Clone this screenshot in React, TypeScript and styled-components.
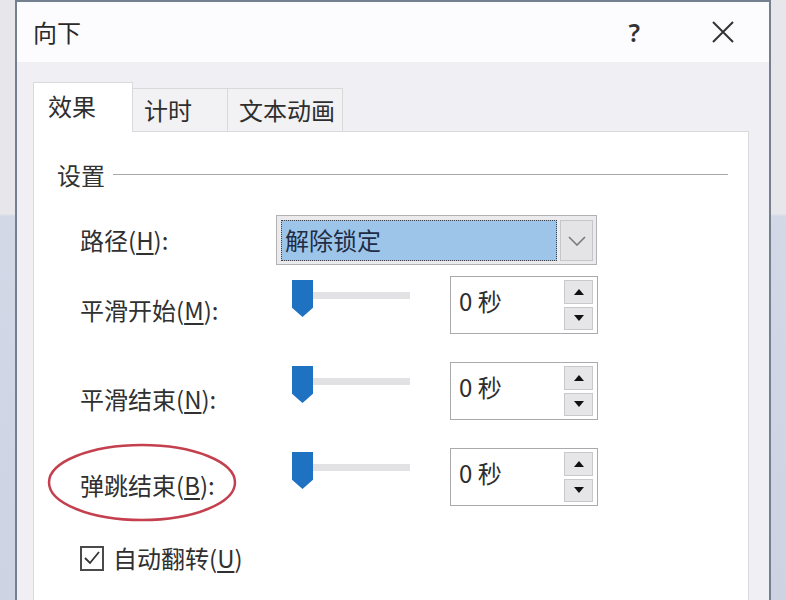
import React from "react";
import styled, { createGlobalStyle } from "styled-components";

const GlobalStyle = createGlobalStyle`
  html, body { margin: 0; padding: 0; }
  body {
    width: 786px;
    height: 600px;
    overflow: hidden;
    font-family: "Noto Sans CJK SC", "Noto Sans", sans-serif;
    color: #2e2e2e;
  }
  * { box-sizing: border-box; }
`;

const Screen = styled.div`
  width: 786px;
  height: 600px;
  overflow: hidden;
  display: flex;
  background: linear-gradient(
    to bottom,
    #e7e7eb 0,
    #e7e7eb 214px,
    #d2d8e6 216px,
    #cdd3e3 100%
  );
`;

const Dialog = styled.div`
  margin-left: 15px;
  width: 756px;
  height: 640px;
  display: flex;
  flex-direction: column;
  border: 2px solid #74808f;
  border-bottom: none;
  background: #f0f0f4;
`;

const TitleBar = styled.div`
  height: 60px;
  display: flex;
  align-items: center;
  padding: 0 35px 0 16px;
  background: #fcfcfe;
`;

const Title = styled.div`
  flex: 1;
  font-size: 24px;
  line-height: 30px;
  color: #2a2a2a;
`;

const HelpButton = styled.div`
  font-family: "Noto Sans", sans-serif;
  font-size: 25px;
  font-weight: 600;
  line-height: 30px;
  color: #333;
  margin-right: 72px;
`;

const CloseButton = styled.div`
  width: 22px;
  height: 22px;
  display: flex;
`;

const Body = styled.div`
  flex: 1;
  display: flex;
  flex-direction: column;
  padding: 20px 20px 0 16px;
`;

const TabStrip = styled.div`
  display: flex;
  align-items: flex-end;
  height: 50px;
  margin-bottom: -1px;
  position: relative;
  z-index: 1;
`;

const Tab = styled.div<{ $active?: boolean; $w: number; $pl: number }>`
  width: ${(p) => p.$w}px;
  height: ${(p) => (p.$active ? 50 : 44)}px;
  padding-left: ${(p) => p.$pl}px;
  padding-top: ${(p) => (p.$active ? 8 : 6)}px;
  font-size: 24px;
  line-height: 30px;
  color: #2e2e2e;
  background: ${(p) => (p.$active ? "#ffffff" : "#f2f2f4")};
  border: 1px solid #d9d9dc;
  border-bottom: ${(p) => (p.$active ? "none" : "1px solid #d9d9dc")};
  border-left: ${(p) => (p.$active ? "1px solid #d9d9dc" : "none")};
`;

const Panel = styled.div`
  flex: 1;
  background: #ffffff;
  border: 1px solid #d9d9dc;
  padding: 28px 20px 0 23px;
  display: flex;
  flex-direction: column;
`;

const GroupHeader = styled.div`
  display: flex;
  align-items: center;
  gap: 8px;
  font-size: 24px;
  line-height: 30px;
  color: #333;
`;

const GroupLine = styled.div`
  flex: 1;
  height: 1px;
  margin-top: -2px;
  background: #a8a8ab;
`;

const Form = styled.div`
  margin-left: 23px;
  display: flex;
  flex-direction: column;
`;

const Row = styled.div<{ $gap: number; $align?: string }>`
  position: relative;
  display: flex;
  align-items: ${(p) => p.$align || "flex-start"};
  margin-top: ${(p) => p.$gap}px;
`;

const Label = styled.div<{ $pt?: number }>`
  width: 196px;
  padding-top: ${(p) => p.$pt || 0}px;
  font-size: 24px;
  line-height: 30px;
  color: #303030;
  white-space: nowrap;
  u { text-underline-offset: 3px; text-decoration-thickness: 1.5px; }
`;

const Combo = styled.div`
  width: 321px;
  height: 50px;
  display: flex;
  gap: 3px;
  padding: 4px 3px 3px 4px;
  border: 1px solid #b2b2b5;
  background: #ebebee;
`;

const ComboValue = styled.div`
  flex: 1;
  background: #9dc5ea;
  outline: 1px dotted #3a3f4a;
  outline-offset: -1px;
  padding-left: 4px;
  font-size: 24px;
  line-height: 40px;
  color: #1f2c44;
`;

const ComboButton = styled.div`
  width: 33px;
  display: flex;
  align-items: center;
  justify-content: center;
  background: #e4e4e6;
  border: 1px solid #c6c6c9;
`;

const Slider = styled.div`
  margin-left: 16px;
  margin-top: 4px;
  display: flex;
  align-items: flex-start;
  width: 118px;
`;

const Thumb = styled.div`
  width: 21px;
  height: 37px;
  background: #1f72c2;
  clip-path: polygon(0 0, 100% 0, 100% 75%, 50% 100%, 0 75%);
`;

const Track = styled.div`
  flex: 1;
  height: 7px;
  margin-top: 12px;
  background: #e2e2e4;
`;

const SpinBox = styled.div`
  margin-left: 40px;
  width: 148px;
  height: 58px;
  display: flex;
  padding: 3px 4px 3px 8px;
  border: 1px solid #aaaaad;
  background: #ffffff;
`;

const SpinValue = styled.div`
  flex: 1;
  padding-top: 6px;
  font-size: 24px;
  line-height: 30px;
  color: #2e2e2e;
`;

const SpinButtons = styled.div`
  width: 29px;
  display: flex;
  flex-direction: column;
  gap: 3px;
`;

const SpinButton = styled.div`
  flex: 1;
  display: flex;
  align-items: center;
  justify-content: center;
  background: #e6e6e8;
  border: 1px solid #c9c9cc;
`;

const CheckRow = styled.div`
  display: flex;
  align-items: center;
  gap: 9px;
  margin-top: 37px;
  font-size: 24px;
  line-height: 30px;
  color: #303030;
  u { text-underline-offset: 3px; text-decoration-thickness: 1.5px; }
`;

const CheckBox = styled.div`
  width: 24px;
  height: 25px;
  border: 2px solid #4a4a4a;
  background: #fff;
  display: flex;
  align-items: center;
  justify-content: center;
`;

const Annotation = styled.svg`
  position: absolute;
  left: -33px;
  top: -5px;
  width: 190px;
  height: 79px;
  pointer-events: none;
`;

const Triangle = ({ up }: { up?: boolean }) => (
  <svg width="10" height="6" viewBox="0 0 10 6">
    <path d={up ? "M0 6 L5 0 L10 6 Z" : "M0 0 L10 0 L5 6 Z"} fill="#111" />
  </svg>
);

const SliderRow = ({
  label,
  gap,
  pt,
  children,
}: {
  label: React.ReactNode;
  gap: number;
  pt: number;
  children?: React.ReactNode;
}) => (
  <Row $gap={gap}>
    {children}
    <Label $pt={pt}>{label}</Label>
    <Slider>
      <Thumb />
      <Track />
    </Slider>
    <SpinBox>
      <SpinValue>0 秒</SpinValue>
      <SpinButtons>
        <SpinButton>
          <Triangle up />
        </SpinButton>
        <SpinButton>
          <Triangle />
        </SpinButton>
      </SpinButtons>
    </SpinBox>
  </Row>
);

export default function App() {
  return (
    <>
      <GlobalStyle />
      <Screen>
        <Dialog>
          <TitleBar>
            <Title>向下</Title>
            <HelpButton>?</HelpButton>
            <CloseButton>
              <svg width="22" height="22" viewBox="0 0 22 22">
                <path d="M1 1 L21 21 M21 1 L1 21" stroke="#333" strokeWidth="2" fill="none" />
              </svg>
            </CloseButton>
          </TitleBar>
          <Body>
            <TabStrip>
              <Tab $active $w={100} $pl={14}>效果</Tab>
              <Tab $w={95} $pl={11}>计时</Tab>
              <Tab $w={115} $pl={11}>文本动画</Tab>
            </TabStrip>
            <Panel>
              <GroupHeader>
                设置
                <GroupLine />
              </GroupHeader>
              <Form>
                <Row $gap={25} $align="center">
                  <Label>
                    路径(<u>H</u>):
                  </Label>
                  <Combo>
                    <ComboValue>解除锁定</ComboValue>
                    <ComboButton>
                      <svg width="18" height="10" viewBox="0 0 18 10">
                        <path d="M1 1 L9 9 L17 1" stroke="#7a7a7e" strokeWidth="1.6" fill="none" />
                      </svg>
                    </ComboButton>
                  </Combo>
                </Row>
                <SliderRow
                  gap={11}
                  pt={19}
                  label={
                    <>
                      平滑开始(<u>M</u>):
                    </>
                  }
                />
                <SliderRow
                  gap={28}
                  pt={22}
                  label={
                    <>
                      平滑结束(<u>N</u>):
                    </>
                  }
                />
                <SliderRow
                  gap={28}
                  pt={22}
                  label={
                    <>
                      弹跳结束(<u>B</u>):
                    </>
                  }
                >
                  <Annotation viewBox="0 0 190 79">
                    <ellipse cx="95" cy="39.5" rx="93" ry="37.5" fill="none" stroke="#c4404e" strokeWidth="2.5" />
                  </Annotation>
                </SliderRow>
                <CheckRow>
                  <CheckBox>
                    <svg width="18" height="16" viewBox="0 0 18 16">
                      <path d="M2 8 L7 13 L16 2" stroke="#333" strokeWidth="1.8" fill="none" />
                    </svg>
                  </CheckBox>
                  <span>
                    自动翻转(<u>U</u>)
                  </span>
                </CheckRow>
              </Form>
            </Panel>
          </Body>
        </Dialog>
      </Screen>
    </>
  );
}
